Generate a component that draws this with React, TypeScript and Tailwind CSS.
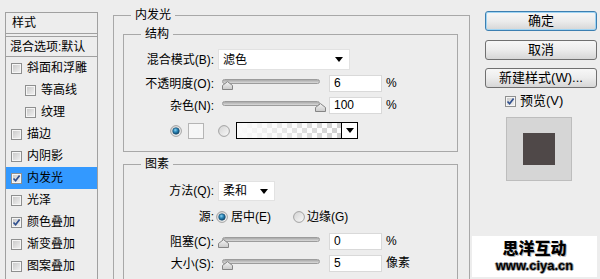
import React from "react";

const FONT = "font-['Liberation_Sans','Noto_Sans_CJK_SC',sans-serif]";

const layerStyles = [
  { name: "斜面和浮雕" },
  { name: "等高线", indent: true },
  { name: "纹理", indent: true },
  { name: "描边" },
  { name: "内阴影" },
  { name: "内发光", checked: true, active: true },
  { name: "光泽" },
  { name: "颜色叠加", checked: true },
  { name: "渐变叠加" },
  { name: "图案叠加" },
];

function Check({ checked }: { checked?: boolean }) {
  return (
    <span className="relative flex h-[11px] w-[11px] shrink-0 items-center justify-center border border-[#8e8f8f] bg-[#f6f6f6]">
      <span className="h-[7px] w-[7px] bg-gradient-to-br from-[#cbcbcb] to-[#efefef]" />
      {checked && (
        <svg className="absolute left-[0px] top-[0px]" width="9" height="9" viewBox="0 0 9 9">
          <path d="M1.5 4.5 L3.6 6.8 L7.6 1.6" fill="none" stroke="#2f4f8e" strokeWidth="1.7" />
        </svg>
      )}
    </span>
  );
}

function Radio({ on }: { on?: boolean }) {
  return (
    <svg width="12" height="12" viewBox="0 0 12 12" className="shrink-0">
      <defs>
        <linearGradient id={on ? "rg-on" : "rg-off"} x1="0" y1="0" x2="1" y2="1">
          <stop offset="0" stopColor="#d2d2d2" />
          <stop offset="1" stopColor="#fafafa" />
        </linearGradient>
        <radialGradient id="dot" cx="0.4" cy="0.35" r="0.7">
          <stop offset="0" stopColor="#8fd3f0" />
          <stop offset="0.45" stopColor="#2a86b8" />
          <stop offset="1" stopColor="#0c3f62" />
        </radialGradient>
      </defs>
      <circle cx="6" cy="6" r="5.4" fill={`url(#${on ? "rg-on" : "rg-off"})`} stroke="#a2a2a2" strokeWidth="1" />
      {on && <circle cx="6" cy="6" r="3.3" fill="url(#dot)" stroke="#174a6b" strokeWidth="0.6" />}
    </svg>
  );
}

function Caret() {
  return (
    <svg width="8" height="5" viewBox="0 0 8 5">
      <path d="M0 0 H8 L4 5 Z" fill="#000" />
    </svg>
  );
}

function Slider({ thumb }: { thumb: number }) {
  return (
    <div className="relative ml-[4px] h-[17px] w-[107px] shrink-0">
      <div className="absolute left-[4px] top-[4px] h-[5px] w-[98px] rounded-full border border-[#9c9c9c] bg-gradient-to-b from-[#a9a9a9] to-[#dadada]" />
      <svg className="absolute top-[6px]" style={{ left: thumb }} width="11" height="9" viewBox="0 0 11 9">
        <defs>
          <linearGradient id="thumb" x1="0" y1="0" x2="0" y2="1">
            <stop offset="0" stopColor="#f4f4f4" />
            <stop offset="1" stopColor="#c9c9c9" />
          </linearGradient>
        </defs>
        <path d="M0.5 8.5 V4.5 L5.5 0.6 L10.5 4.5 V8.5 Z" fill="url(#thumb)" stroke="#858585" strokeWidth="1" />
      </svg>
    </div>
  );
}

function NumberBox({ value, unit }: { value: string; unit: string }) {
  return (
    <>
      <div className="ml-[4px] flex h-[17px] w-[53px] shrink-0 items-center border border-[#d9d9d9] bg-white pl-[4px] text-[12px] leading-[15px]">
        {value}
      </div>
      <span className="ml-[4px] text-[12px] leading-[15px]">{unit}</span>
    </>
  );
}

function Label({ children }: { children: React.ReactNode }) {
  return <span className="w-[90px] shrink-0 text-right text-[12px] leading-[16px]">{children}</span>;
}

function Button({ children, primary }: { children: React.ReactNode; primary?: boolean }) {
  return (
    <div
      className={`flex h-[20px] w-[112px] items-center justify-center rounded-[3px] border bg-gradient-to-b from-[#f7f7f7] via-[#ececec] to-[#d6d6d6] text-[13px] leading-[16px] ${
        primary ? "border-[#3c7fb1] shadow-[inset_0_0_0_1px_#9fd4f3]" : "border-[#707070]"
      }`}
    >
      {children}
    </div>
  );
}

function GradientPicker() {
  return (
    <div className="ml-[6px] flex h-[17px] w-[122px] shrink-0 border border-black">
      <svg className="h-full flex-1" viewBox="0 0 104 15" preserveAspectRatio="none">
        <defs>
          <pattern id="checker" width="10" height="10" patternUnits="userSpaceOnUse">
            <rect width="10" height="10" fill="#ffffff" />
            <rect width="5" height="5" fill="#d0d0d0" />
            <rect x="5" y="5" width="5" height="5" fill="#d0d0d0" />
          </pattern>
          <linearGradient id="fade" x1="0" y1="0" x2="1" y2="0">
            <stop offset="0" stopColor="#fafafa" stopOpacity="1" />
            <stop offset="1" stopColor="#fafafa" stopOpacity="0" />
          </linearGradient>
        </defs>
        <rect width="104" height="15" fill="url(#checker)" />
        <rect width="104" height="15" fill="url(#fade)" />
      </svg>
      <div className="flex w-[16px] items-center justify-center border-l border-black bg-white">
        <Caret />
      </div>
    </div>
  );
}

export default function App() {
  return (
    <div className={`relative flex h-[279px] w-[600px] overflow-hidden bg-[#ededed] text-black ${FONT}`}>
      {/* style list */}
      <div className="ml-[5px] mt-[12px] h-[290px] w-[93px] shrink-0 border border-[#a0a0a0]">
        <div className="h-[21px] border-b border-[#a0a0a0] pl-[6px] pt-[2px] text-[12px] leading-[16px]">样式</div>
        <div className="mt-[2px] h-[21px] border-y border-[#a0a0a0] pl-[4px] pt-[2px] text-[12px] leading-[16px]">
          混合选项:默认
        </div>
        {layerStyles.map((s) => (
          <div
            key={s.name}
            className={`flex h-[22px] items-center gap-[5px] text-[12px] leading-[16px] ${s.indent ? "pl-[19px]" : "pl-[5px]"} ${
              s.active ? "bg-[#3399ff]" : ""
            }`}
          >
            <Check checked={s.checked} />
            <span>{s.name}</span>
          </div>
        ))}
      </div>

      {/* inner glow settings */}
      <fieldset className="ml-[15px] mt-[7px] h-[300px] w-[357px] shrink-0 border border-[#a8a8a8] p-0">
        <legend className="ml-[17px] px-[4px] text-[12px] leading-[16px]">内发光</legend>

        <fieldset className="ml-[9px] mt-[3px] w-[335px] border border-[#a8a8a8] p-0 pb-[12px]">
          <legend className="ml-[17px] px-[4px] text-[12px] leading-[16px]">结构</legend>
          <div className="mt-[7px] flex h-[21px] items-center">
            <Label>混合模式(B):</Label>
            <div className="ml-[4px] flex h-[21px] w-[132px] items-center justify-between border border-[#e2e2e2] bg-white pl-[4px] pr-[6px] text-[12px]">
              <span>滤色</span>
              <Caret />
            </div>
          </div>
          <div className="mt-[5px] flex h-[17px] items-center">
            <Label>不透明度(O):</Label>
            <Slider thumb={4} />
            <NumberBox value="6" unit="%" />
          </div>
          <div className="mt-[5px] flex h-[17px] items-center">
            <Label>杂色(N):</Label>
            <Slider thumb={97} />
            <NumberBox value="100" unit="%" />
          </div>
          <div className="mt-[8px] flex h-[17px] items-center pl-[46px]">
            <Radio on />
            <div className="ml-[6px] h-[16px] w-[16px] border border-[#b5b5b5] bg-[#f7f7f7]" />
            <div className="ml-[14px]">
              <Radio />
            </div>
            <GradientPicker />
          </div>
        </fieldset>

        <fieldset className="ml-[9px] mt-[4px] h-[140px] w-[335px] border border-[#a8a8a8] p-0">
          <legend className="ml-[17px] px-[4px] text-[12px] leading-[16px]">图素</legend>
          <div className="mt-[9px] flex h-[20px] items-center">
            <Label>方法(Q):</Label>
            <div className="ml-[4px] flex h-[20px] w-[57px] items-center justify-between border border-[#e2e2e2] bg-white pl-[4px] pr-[6px] text-[12px]">
              <span>柔和</span>
              <Caret />
            </div>
          </div>
          <div className="mt-[8px] flex h-[16px] items-center text-[12px] leading-[16px]">
            <Label>源:</Label>
            <div className="ml-[2px]">
              <Radio on />
            </div>
            <span className="ml-[3px]">居中(E)</span>
            <div className="ml-[22px]">
              <Radio />
            </div>
            <span className="ml-[2px]">边缘(G)</span>
          </div>
          <div className="mt-[8px] flex h-[17px] items-center">
            <Label>阻塞(C):</Label>
            <Slider thumb={0} />
            <NumberBox value="0" unit="%" />
          </div>
          <div className="mt-[5px] flex h-[17px] items-center">
            <Label>大小(S):</Label>
            <Slider thumb={4} />
            <NumberBox value="5" unit="像素" />
          </div>
        </fieldset>
      </fieldset>

      {/* buttons + preview */}
      <div className="ml-[15px] mt-[11px] flex w-[112px] shrink-0 flex-col">
        <Button primary>确定</Button>
        <div className="mt-[9px]">
          <Button>取消</Button>
        </div>
        <div className="mt-[8px]">
          <Button>新建样式(W)...</Button>
        </div>
        <div className="mt-[5px] flex h-[16px] items-center gap-[4px] pl-[20px] text-[13px] leading-[16px]">
          <Check checked />
          <span>预览(V)</span>
        </div>
        <div className="ml-[21px] mt-[8px] flex h-[64px] w-[66px] items-center justify-center border border-[#bdbdbd] bg-[#d6d6d6]">
          <div className="h-[32px] w-[32px] bg-[#4f4848]" />
        </div>
      </div>

      {/* watermark overlay */}
      <div className="absolute left-[472px] top-[236px] flex h-[41px] w-[125px] flex-col items-center bg-white pt-[1px]">
        <span className="font-['Noto_Sans_CJK_SC',sans-serif] text-[16px] font-black leading-[21px] [text-shadow:1px_1px_0_#bbb]">
          思洋互动
        </span>
        <span className="mt-[1px] font-['Liberation_Sans',sans-serif] text-[13px] font-bold leading-[14px] [text-shadow:1px_0_0_#999,-1px_0_0_#999,0_1px_0_#999,0_-1px_0_#999]">
          www.ciya.cn
        </span>
      </div>
    </div>
  );
}
